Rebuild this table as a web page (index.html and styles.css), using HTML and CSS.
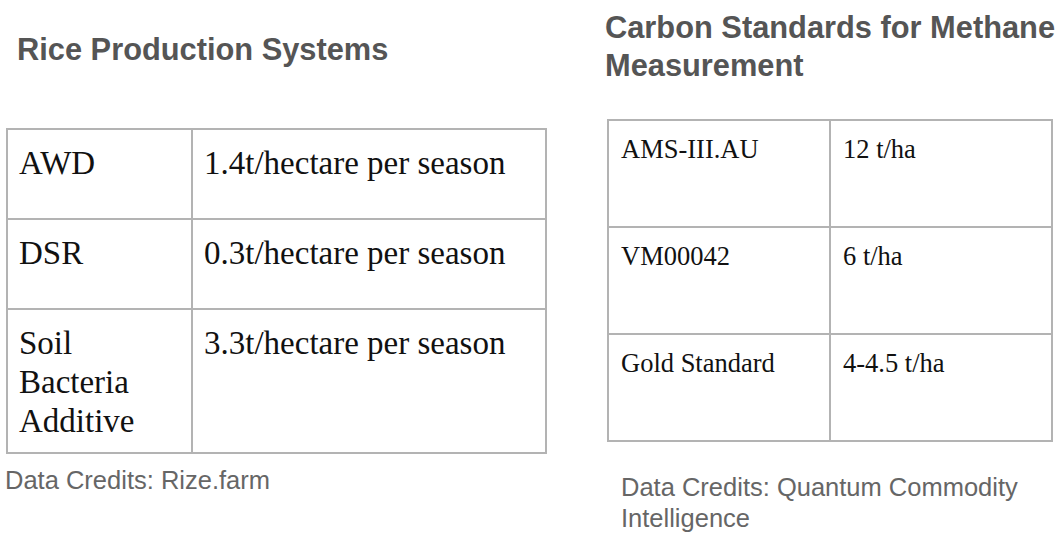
FILE: index.html
```html
<!DOCTYPE html>
<html>
<head>
<meta charset="utf-8">
<link rel="stylesheet" href="styles.css">
</head>
<body>
<div class="page">
  <section class="col col-left">
    <h2 class="title title-left">Rice Production Systems</h2>
    <table class="data data-left">
      <tr><td class="k">AWD</td><td class="v">1.4t/hectare per season</td></tr>
      <tr><td class="k">DSR</td><td class="v">0.3t/hectare per season</td></tr>
      <tr class="tall"><td class="k">Soil<br>Bacteria<br>Additive</td><td class="v">3.3t/hectare per season</td></tr>
    </table>
    <p class="credit credit-left">Data Credits: Rize.farm</p>
  </section>
  <section class="col col-right">
    <h2 class="title title-right">Carbon Standards for Methane Measurement</h2>
    <table class="data data-right">
      <tr><td class="k">AMS-III.AU</td><td class="v">12 t/ha</td></tr>
      <tr><td class="k">VM00042</td><td class="v">6 t/ha</td></tr>
      <tr><td class="k">Gold Standard</td><td class="v">4-4.5 t/ha</td></tr>
    </table>
    <p class="credit credit-right">Data Credits: Quantum Commodity Intelligence</p>
  </section>
</div>
</body>
</html>
```
FILE: styles.css
```css
html, body {
  margin: 0;
  padding: 0;
  background: #ffffff;
}
.page {
  display: flex;
  width: 1060px;
  height: 557px;
  overflow: hidden;
}
.col {
  display: flex;
  flex-direction: column;
}
.col-left {
  width: 600px;
  padding-left: 6px;
  box-sizing: border-box;
}
.col-right {
  width: 460px;
  padding-left: 7px;
  box-sizing: border-box;
}
.title {
  font-family: "Liberation Sans", Arial, sans-serif;
  font-weight: bold;
  font-size: 30.8px;
  line-height: 38px;
  color: #555555;
  margin: 0;
  white-space: nowrap;
}
.title-left {
  margin: 31px 0 0 11px;
}
.title-right {
  margin: 9px 0 0 -2px;
  width: 460px;
  white-space: normal;
}
.data {
  border-collapse: collapse;
  font-family: "Liberation Serif", "Times New Roman", serif;
  color: #111111;
}
.data td {
  border: 2px solid #b3b3b3;
  vertical-align: top;
  padding: 0;
}
.data-left {
  margin-top: 59px;
  width: 541px;
  font-size: 33px;
  line-height: 39px;
}
.data-left td {
  padding: 14px 12px 11px 11px;
  height: 63px;
}
.data-left .k { width: 160px; }
.data-left .tall td { height: 117px; }
.data-right {
  margin-top: 34px;
  width: 446px;
  font-size: 26.5px;
  line-height: 32px;
}
.data-right td {
  padding: 12px 12px 13px 12px;
  height: 80px;
}
.data-right .k { width: 196px; }
.credit {
  font-family: "Liberation Sans", Arial, sans-serif;
  font-size: 25.5px;
  line-height: 31px;
  color: #666666;
  margin: 0;
}
.credit-left {
  margin: 11px 0 0 -1px;
}
.credit-right {
  margin: 30px 0 0 14px;
  width: 420px;
}
```
